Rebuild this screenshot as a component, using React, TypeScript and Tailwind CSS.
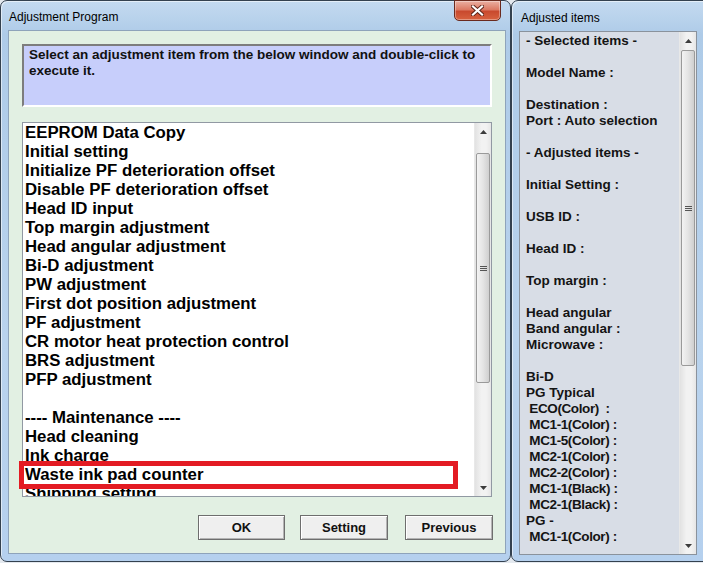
import React from "react";

const FONT = "font-['Liberation_Sans',Arial,sans-serif]";

const listItems = [
  "EEPROM Data Copy",
  "Initial setting",
  "Initialize PF deterioration offset",
  "Disable PF deterioration offset",
  "Head ID input",
  "Top margin adjustment",
  "Head angular adjustment",
  "Bi-D adjustment",
  "PW adjustment",
  "First dot position adjustment",
  "PF adjustment",
  "CR motor heat protection control",
  "BRS adjustment",
  "PFP adjustment",
  "",
  "---- Maintenance ----",
  "Head cleaning",
  "Ink charge",
  "Waste ink pad counter",
  "Shipping setting",
];

const adjusted = [
  "- Selected items -",
  "",
  "Model Name :",
  "",
  "Destination :",
  "Port : Auto selection",
  "",
  "- Adjusted items -",
  "",
  "Initial Setting :",
  "",
  "USB ID :",
  "",
  "Head ID :",
  "",
  "Top margin :",
  "",
  "Head angular",
  "Band angular :",
  "Microwave :",
  "",
  "Bi-D",
  "PG Typical",
  " ECO(Color)  :",
  " MC1-1(Color) :",
  " MC1-5(Color) :",
  " MC2-1(Color) :",
  " MC2-2(Color) :",
  " MC1-1(Black) :",
  " MC2-1(Black) :",
  "PG -",
  " MC1-1(Color) :",
];

function Arrow({ up }: { up?: boolean }) {
  return (
    <div className="h-[17px] flex items-center justify-center">
      <svg width="7" height="4" viewBox="0 0 7 4">
        {up ? (
          <polygon points="0,4 7,4 3.5,0" fill="#3c3c3c" />
        ) : (
          <polygon points="0,0 7,0 3.5,4" fill="#3c3c3c" />
        )}
      </svg>
    </div>
  );
}

// windows 7 style vertical scrollbar
function ScrollBar({ gapClass, thumbClass }: { gapClass: string; thumbClass: string }) {
  return (
    <div className="w-[17px] h-full flex flex-col shrink-0 bg-[linear-gradient(90deg,#e2e2e2,#f2f2f2_40%,#f2f2f2_70%,#e6e6e6)] border-l border-[#e8e8e8]">
      <Arrow up />
      <div className={gapClass} />
      <div
        className={`${thumbClass} mx-[1px] rounded-[2px] border border-[#9a9a9a] bg-[linear-gradient(90deg,#f3f3f3,#e4e4e4_50%,#cfcfcf)] flex items-center justify-center`}
      >
        <div className="flex flex-col gap-[1px]">
          <div className="w-[7px] h-[1px] bg-[#555]" />
          <div className="w-[7px] h-[1px] bg-[#555]" />
          <div className="w-[7px] h-[1px] bg-[#555]" />
        </div>
      </div>
      <div className="flex-1" />
      <Arrow />
    </div>
  );
}

function CloseButton() {
  return (
    <div className="absolute right-[5px] top-[-1px] w-[47px] h-[21px] rounded-b-[5px] border border-[#6a2a1e] bg-[linear-gradient(180deg,#eab0a2_0%,#dc7a64_45%,#c94a2e_55%,#d7623f_100%)] shadow-[inset_0_0_0_1px_rgba(255,255,255,0.35)] flex items-center justify-center">
      <svg width="13" height="11" viewBox="0 0 13 11">
        <path d="M2 1.5 L11 9.5 M11 1.5 L2 9.5" stroke="#5b2418" strokeWidth="4" strokeLinecap="square" />
        <path d="M2 1.5 L11 9.5 M11 1.5 L2 9.5" stroke="#ffffff" strokeWidth="2.2" strokeLinecap="square" />
      </svg>
    </div>
  );
}

function Button({ label, className }: { label: string; className: string }) {
  return (
    <button
      className={`${className} h-[25px] border border-[#6e6e6e] bg-[#efefef] shadow-[inset_1px_1px_0_#ffffff,inset_-1px_-1px_0_#b4b4b4] text-[13px] font-bold text-[#111]`}
    >
      {label}
    </button>
  );
}

export default function App() {
  return (
    <div className={`w-[703px] h-[563px] overflow-hidden bg-[#e4e9ef] flex ${FONT}`}>
      {/* Adjustment Program window */}
      <div className="w-[511px] h-[562px] shrink-0 flex flex-col rounded-[7px] border border-[#34414f] bg-[linear-gradient(180deg,#c4daf0_0%,#aecbe8_6%,#b9d3ed_60%,#b5d0ee_100%)] shadow-[inset_1px_1px_0_rgba(255,255,255,0.55)] pl-[7px] pr-[4px]">
        <div className="relative h-[29px] shrink-0">
          <div className="pl-[1px] pt-[9px] text-[12px] leading-[15px] text-black">Adjustment Program</div>
          <CloseButton />
        </div>
        <div className="h-[524px] shrink-0 border border-[#8ea3ba] bg-[#e2f0e3] px-[13px] pt-[13px] flex flex-col">
          <div className="h-[63px] shrink-0 border-2 border-t-[#7d7d7d] border-l-[#7d7d7d] border-r-white border-b-white bg-[#c7cefb] pl-[5px] pt-[1px] text-[13.5px] leading-[16px] font-bold text-[#111]">
            Select an adjustment item from the below window and double-click to execute it.
          </div>

          <div className="relative mt-[15px] h-[375px] shrink-0">
            <div className="h-full border border-[#9199a3] bg-white flex">
              <div className="flex-1 overflow-hidden pl-[2px]">
                {listItems.map((item, i) => (
                  <div key={i} className="h-[19px] leading-[19px] text-[16.8px] font-bold text-black whitespace-pre">
                    {item || " "}
                  </div>
                ))}
              </div>
              <ScrollBar gapClass="h-[13px]" thumbClass="h-[230px]" />
            </div>
            {/* highlight */}
            <div className="absolute left-[-3px] top-[339px] w-[439px] h-[28px] border-[5px] border-[#e31b23]" />
          </div>

          <div className="mt-[18px] flex justify-end mr-[-1px]">
            <Button label="OK" className="w-[87px]" />
            <Button label="Setting" className="w-[88px] ml-[15px]" />
            <Button label="Previous" className="w-[88px] ml-[17px]" />
          </div>
        </div>
      </div>

      {/* Adjusted items window */}
      <div className="w-[200px] h-[562px] shrink-0 flex flex-col rounded-[7px] border border-[#34414f] bg-[linear-gradient(180deg,#c4daf0_0%,#aecbe8_6%,#b9d3ed_60%,#b5d0ee_100%)] shadow-[inset_1px_1px_0_rgba(255,255,255,0.55)] pl-[7px]">
        <div className="h-[30px] shrink-0 pl-[2px] pt-[10px] text-[12px] leading-[15px] text-black">Adjusted items</div>
        <div className="w-[178px] h-[524px] shrink-0 border border-[#8a929c] bg-[#d8dde6] flex">
          <div className="flex-1 overflow-hidden pl-[6px] pt-[1px]">
            {adjusted.map((line, i) => (
              <div
                key={i}
                className={`h-[16px] leading-[16px] text-[13.5px] font-bold text-[#141414] whitespace-pre ${
                  line.startsWith(" ") ? "tracking-[-0.4px]" : ""
                }`}
              >
                {line || " "}
              </div>
            ))}
          </div>
          <ScrollBar gapClass="h-[1px]" thumbClass="h-[316px]" />
        </div>
      </div>
    </div>
  );
}
